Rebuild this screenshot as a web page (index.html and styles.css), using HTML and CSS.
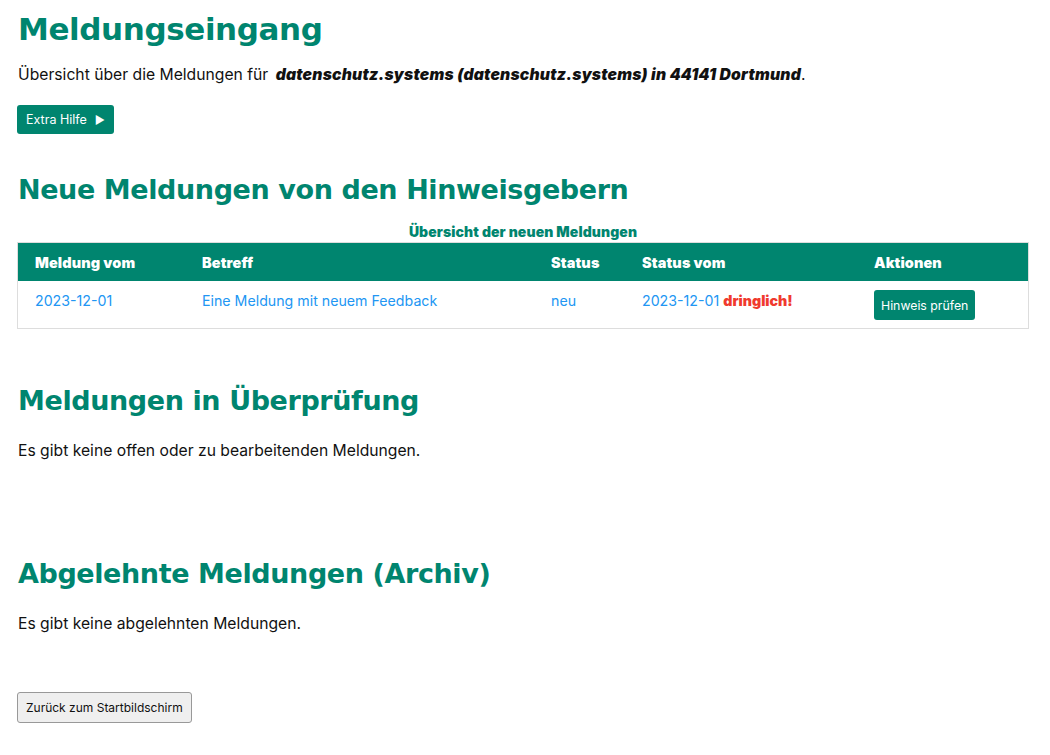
FILE: index.html
```html
<!DOCTYPE html>
<html lang="de">
<head>
<meta charset="utf-8">
<title>Meldungseingang</title>
<link rel="stylesheet" href="styles.css">
</head>
<body>
<main class="page">
  <h1 class="title">Meldungseingang</h1>
  <p class="intro">Übersicht über die Meldungen für <b class="org">datenschutz.systems (datenschutz.systems) in 44141 Dortmund</b>.</p>
  <button class="btn btn-green btn-help">Extra Hilfe <span class="tri">&#9654;</span></button>

  <h2 class="section first">Neue Meldungen von den Hinweisgebern</h2>
  <table class="list">
    <caption>Übersicht der neuen Meldungen</caption>
    <thead>
      <tr>
        <th class="c1">Meldung vom</th>
        <th class="c2">Betreff</th>
        <th class="c3">Status</th>
        <th class="c4">Status vom</th>
        <th class="c5">Aktionen</th>
      </tr>
    </thead>
    <tbody>
      <tr>
        <td><a href="#">2023-12-01</a></td>
        <td><a href="#">Eine Meldung mit neuem Feedback</a></td>
        <td><a href="#">neu</a></td>
        <td><a href="#">2023-12-01</a> <span class="urgent">dringlich!</span></td>
        <td><button class="btn btn-green btn-small">Hinweis prüfen</button></td>
      </tr>
    </tbody>
  </table>

  <h2 class="section second">Meldungen in Überprüfung</h2>
  <p class="text">Es gibt keine offen oder zu bearbeitenden Meldungen.</p>

  <h2 class="section third">Abgelehnte Meldungen (Archiv)</h2>
  <p class="text">Es gibt keine abgelehnten Meldungen.</p>

  <button class="btn btn-grey">Zurück zum Startbildschirm</button>
</main>
</body>
</html>
```

FILE: styles.css
```css
html, body {
  margin: 0;
  padding: 0;
  background: #fff;
}
body {
  font-family: "Inter", "Liberation Sans", sans-serif;
  color: #111;
  font-size: 15.7px;
}
.page {
  padding: 10px 22px 20px 17px;
}
.title {
  font-family: "DejaVu Sans", sans-serif;
  font-weight: 700;
  color: #00856f;
  font-size: 31px;
  letter-spacing: -0.4px;
  margin: 0 0 0 1px;
  line-height: 38px;
}
.intro {
  margin: 17px 0 0 1px;
  font-size: 15.7px;
  line-height: 20px;
}
.org {
  font-style: italic;
  font-weight: 900;
  letter-spacing: 0.2px;
  margin-left: 3px;
}
.btn {
  font-family: "Inter", "Liberation Sans", sans-serif;
  border-radius: 3px;
  cursor: pointer;
}
.btn-green {
  background: #00856f;
  color: #fff;
  border: none;
}
.btn-help {
  margin-top: 20px;
  height: 29px;
  padding: 0 9px 0 9px;
  font-size: 12.5px;
  display: flex;
  align-items: center;
  gap: 8px;
}
.tri {
  font-size: 11px;
}
.section {
  font-family: "DejaVu Sans", sans-serif;
  font-weight: 700;
  color: #00856f;
  font-size: 27px;
  letter-spacing: -0.4px;
  line-height: 34px;
  margin: 0 0 0 1px;
}
.section.first {
  margin-top: 39px;
}
.section.second {
  margin-top: 55px;
}
.section.third {
  margin-top: 96px;
}
.list {
  width: 1012px;
  border-collapse: collapse;
  border: 1px solid #ddd;
  margin-top: 0;
}
.list caption {
  color: #00856f;
  font-weight: 900;
  font-size: 14px;
  padding: 16px 0 2px;
  letter-spacing: 0.1px;
}
.list th {
  background: #00856f;
  color: #fff;
  font-weight: 900;
  font-size: 14.5px;
  text-align: left;
  height: 38px;
  padding: 0 0 0 17px;
  letter-spacing: 0.1px;
}
.list td {
  height: 47px;
  padding: 11px 0 0 17px;
  font-size: 14.2px;
  vertical-align: top;
  box-sizing: border-box;
}
.c1 { width: 150px; }
.c2 { width: 332px; }
.c3 { width: 74px; }
.c4 { width: 215px; }
.list a {
  color: #2196f3;
  text-decoration: none;
}
.urgent {
  color: #f03a2e;
  font-weight: 900;
}
.btn-small {
  font-size: 12.3px;
  height: 30px;
  padding: 0 7px;
  margin-top: -2px;
}
.text {
  margin: 23px 0 0 1px;
  font-size: 15.7px;
  line-height: 20px;
}
.btn-grey {
  display: block;
  margin-top: 58px;
  background: #efefef;
  border: 1px solid #999;
  color: #111;
  font-size: 12px;
  height: 31px;
  padding: 0 8px;
}
```
